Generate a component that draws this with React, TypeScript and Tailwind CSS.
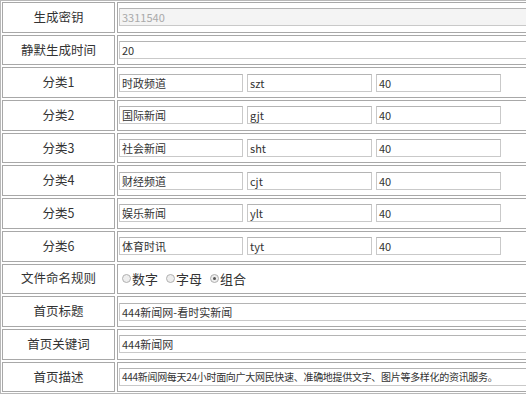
import React from 'react';

const font = { fontFamily: '"Noto Sans CJK SC", "Noto Sans", sans-serif' };

const cats = [
  { name: '分类1', title: '时政频道', dir: 'szt', num: '40' },
  { name: '分类2', title: '国际新闻', dir: 'gjt', num: '40' },
  { name: '分类3', title: '社会新闻', dir: 'sht', num: '40' },
  { name: '分类4', title: '财经频道', dir: 'cjt', num: '40' },
  { name: '分类5', title: '娱乐新闻', dir: 'ylt', num: '40' },
  { name: '分类6', title: '体育时讯', dir: 'tyt', num: '40' },
];

const Field = ({
  value,
  className = '',
  small,
  muted,
}: {
  value: string;
  className?: string;
  small?: boolean;
  muted?: boolean;
}) => (
  <div
    className={`h-[18px] border border-[#c9c9c9] border-t-[#b4b4b4] px-[2px] leading-[16px] whitespace-nowrap overflow-hidden ${
      small ? 'text-[10px] tracking-[-0.3px]' : 'text-[11px]'
    } ${muted ? 'bg-[#f4f4f4] text-[#aaa]' : 'bg-white text-[#333]'} ${className}`}
  >
    {value}
  </div>
);

const Row = ({ label, children }: { label: string; children: React.ReactNode }) => (
  <div className="flex h-[30.7px] gap-[2px]">
    <div className="w-[113px] shrink-0 flex items-center justify-center border border-[#a8a8a8] text-[12.5px] text-[#333]">
      {label}
    </div>
    <div className="flex-1 flex items-center gap-[4px] border border-[#a8a8a8] pl-[1px]">{children}</div>
  </div>
);

const Radio = ({ label, checked }: { label: string; checked?: boolean }) => (
  <span className="flex items-center gap-[1px] mr-[8px]">
    <span className="w-[9px] h-[9px] rounded-full border border-[#b0b0b0] bg-[#eee] flex items-center justify-center">
      {checked && <span className="w-[3px] h-[3px] rounded-full bg-[#555]" />}
    </span>
    <span className="text-[13px] text-[#333]">{label}</span>
  </span>
);

export default function App() {
  return (
    <div className="w-[526px] h-[394px] overflow-hidden bg-white" style={font}>
      <div className="w-[600px] border border-[#b8b8b8] p-[1px] flex flex-col gap-[2px]">
        <Row label="生成密钥">
          <Field value="3311540" muted className="w-[440px]" />
        </Row>
        <Row label="静默生成时间">
          <Field value="20" className="w-[440px]" />
        </Row>
        {cats.map((c) => (
          <Row key={c.name} label={c.name}>
            <Field value={c.title} className="w-[124px]" />
            <Field value={c.dir} className="w-[125px]" />
            <Field value={c.num} className="w-[125px]" />
          </Row>
        ))}
        <Row label="文件命名规则">
          <div className="flex items-center pl-[3px]">
            <Radio label="数字" />
            <Radio label="字母" />
            <Radio label="组合" checked />
          </div>
        </Row>
        <Row label="首页标题">
          <Field value="444新闻网-看时实新闻" className="w-[440px]" />
        </Row>
        <Row label="首页关键词">
          <Field value="444新闻网" className="w-[440px]" />
        </Row>
        <Row label="首页描述">
          <Field
            value="444新闻网每天24小时面向广大网民快速、准确地提供文字、图片等多样化的资讯服务。"
            small
            className="w-[440px]"
          />
        </Row>
      </div>
    </div>
  );
}
